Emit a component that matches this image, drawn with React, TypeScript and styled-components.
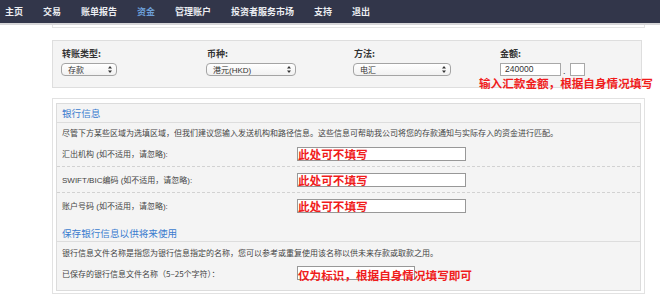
import styled, { createGlobalStyle } from 'styled-components';

const GlobalStyle = createGlobalStyle`
  body {
    margin: 0;
    background: #fff;
    font-family: 'Liberation Sans', 'Noto Sans CJK SC', sans-serif;
  }
`;

const NavBar = styled.nav`
  display: flex;
  align-items: center;
  gap: 20px;
  height: 23px;
  padding-left: 5px;
  background: #32364a;
  border-bottom: 2px solid #d6d6d8;
`;

const NavItem = styled.span<{ active?: boolean }>`
  font-family: 'Noto Sans CJK SC', sans-serif;
  font-size: 9px;
  font-weight: bold;
  color: ${({ active }) => (active ? '#6c9fd8' : '#eceef2')};
`;

const Main = styled.div`
  margin-left: 52px;
  width: 593px;
`;

const PrevPanelEdge = styled.div`
  height: 2px;
  border: 1px solid #e4e4e4;
  border-top: none;
`;

const TransferPanel = styled.div`
  margin-top: 12px;
  margin-right: 3px;
  height: 48px;
  box-sizing: border-box;
  border: 1px solid #dedede;
  background: #f4f4f4;
  display: grid;
  grid-template-columns: 145px 147px 146px 1fr;
  padding: 8px 0 0 9px;
`;

const Field = styled.div`
  position: relative;
  display: flex;
  flex-direction: column;
  align-items: flex-start;
`;

const FieldLabel = styled.div`
  font-family: 'Noto Sans CJK SC', sans-serif;
  font-size: 9px;
  font-weight: bold;
  line-height: 10px;
  color: #333;
  margin-bottom: 4px;
`;

const Select = styled.div<{ w: number }>`
  display: flex;
  align-items: center;
  justify-content: space-between;
  box-sizing: border-box;
  width: ${({ w }) => w}px;
  height: 13px;
  margin-left: -1px;
  padding: 0 4px 0 6px;
  border: 1px solid #a4a4a4;
  border-radius: 4px;
  background: linear-gradient(#ffffff, #f1f1f1);
  font-size: 8px;
  color: #333;
`;

const AmountRow = styled.div`
  display: flex;
  align-items: flex-end;
  gap: 2px;
`;

const TextBox = styled.div<{ w: number }>`
  box-sizing: border-box;
  width: ${({ w }) => w}px;
  height: 13px;
  padding-left: 4px;
  border: 1px solid #a8a8a8;
  background: #fff;
  font-size: 8.5px;
  line-height: 11px;
  color: #333;
`;

const Dot = styled.span`
  font-size: 9px;
  line-height: 9px;
  color: #333;
  margin-right: 2px;
`;

const Note = styled.div`
  position: absolute;
  left: -21px;
  top: 28px;
  white-space: nowrap;
  font-family: 'Noto Sans CJK SC', sans-serif;
  font-size: 11.6px;
  font-weight: bold;
  line-height: 13px;
  color: #f01c1c;
`;

const BankFrame = styled.div`
  margin-top: 10px;
  border: 1px solid #e2e2e2;
  padding: 4px 3px 2px 3px;
  background: #fff;
`;

const BankPanel = styled.div`
  border: 1px solid #dcdcdc;
  background: #f4f4f4;
  padding-bottom: 6px;
`;

const SectionTitle = styled.div<{ h: number; pt?: number }>`
  display: flex;
  align-items: center;
  height: ${({ h, pt }) => h - (pt ?? 0)}px;
  padding: ${({ pt }) => pt ?? 0}px 0 0 5px;
  border-bottom: 1px solid #dddddd;
  font-family: 'Noto Sans CJK SC', sans-serif;
  font-size: 9.6px;
  color: #3b7ccf;
`;

const Desc = styled.div<{ h: number }>`
  display: flex;
  align-items: center;
  height: ${({ h }) => h}px;
  padding-left: 5px;
  font-family: 'Noto Sans CJK SC', sans-serif;
  font-size: 8px;
  color: #444;
`;

const FormRow = styled.div<{ h: number; dashed?: boolean }>`
  display: flex;
  align-items: center;
  height: ${({ h }) => h}px;
  border-bottom: ${({ dashed }) => (dashed ? '1px dashed #d2d2d2' : 'none')};
`;

const RowLabel = styled.div<{ cjk?: boolean }>`
  flex: 0 0 235px;
  padding-left: 5px;
  font-family: ${({ cjk }) =>
    cjk ? "'Noto Sans CJK SC', sans-serif" : "'Liberation Sans', 'Noto Sans CJK SC', sans-serif"};
  font-size: 8px;
  color: #444;
`;

const NoteInput = styled.div<{ $w: number; $h: number }>`
  position: relative;
  flex: 0 0 auto;
  box-sizing: border-box;
  width: ${({ $w }) => $w}px;
  height: ${({ $h }) => $h}px;
  border: 1px solid #989898;
  background: #ffffff;
`;

const NoteText = styled.span<{ $dy: number }>`
  position: absolute;
  left: 0;
  top: ${({ $dy }) => $dy}px;
  white-space: nowrap;
  font-family: 'Noto Sans CJK SC', sans-serif;
  font-size: 11.6px;
  font-weight: bold;
  line-height: 12px;
  color: #f01c1c;
`;

const Arrows = () => (
  <svg width="4" height="7" viewBox="0 0 4 7">
    <path d="M2 0 L4 2.6 L0 2.6 Z M2 7 L4 4.4 L0 4.4 Z" fill="#333" />
  </svg>
);

const navItems = ['主页', '交易', '账单报告', '资金', '管理账户', '投资者服务市场', '支持', '退出'];

export default function App() {
  return (
    <>
      <GlobalStyle />
      <NavBar>
        {navItems.map((n) => (
          <NavItem key={n} active={n === '资金'}>
            {n}
          </NavItem>
        ))}
      </NavBar>
      <Main>
        <PrevPanelEdge />
        <TransferPanel>
          <Field>
            <FieldLabel>转账类型:</FieldLabel>
            <Select w={56}>
              <span>存款</span>
              <Arrows />
            </Select>
          </Field>
          <Field>
            <FieldLabel>币种:</FieldLabel>
            <Select w={90}>
              <span>港元(HKD)</span>
              <Arrows />
            </Select>
          </Field>
          <Field>
            <FieldLabel>方法:</FieldLabel>
            <Select w={98}>
              <span>电汇</span>
              <Arrows />
            </Select>
          </Field>
          <Field>
            <FieldLabel>金额:</FieldLabel>
            <AmountRow>
              <TextBox w={61}>240000</TextBox>
              <Dot>.</Dot>
              <TextBox w={15} />
            </AmountRow>
            <Note>输入汇款金额，根据自身情况填写</Note>
          </Field>
        </TransferPanel>
        <BankFrame>
          <BankPanel>
            <SectionTitle h={18}>银行信息</SectionTitle>
            <Desc h={18}>
              尽管下方某些区域为选填区域，但我们建议您输入发送机构和路径信息。这些信息可帮助我公司将您的存款通知与实际存入的资金进行匹配。
            </Desc>
            <FormRow h={25} dashed>
              <RowLabel>汇出机构 (如不适用，请忽略):</RowLabel>
              <NoteInput $w={169} $h={14}>
                <NoteText $dy={0}>此处可不填写</NoteText>
              </NoteInput>
            </FormRow>
            <FormRow h={25} dashed>
              <RowLabel>SWIFT/BIC编码 (如不适用，请忽略):</RowLabel>
              <NoteInput $w={169} $h={14}>
                <NoteText $dy={0}>此处可不填写</NoteText>
              </NoteInput>
            </FormRow>
            <FormRow h={25}>
              <RowLabel>账户号码 (如不适用，请忽略):</RowLabel>
              <NoteInput $w={169} $h={14}>
                <NoteText $dy={0}>此处可不填写</NoteText>
              </NoteInput>
            </FormRow>
            <SectionTitle h={23} pt={6}>保存银行信息以供将来使用</SectionTitle>
            <Desc h={20}>
              银行信息文件名称是指您为银行信息指定的名称，您可以参考或重复使用该名称以供未来存款或取款之用。
            </Desc>
            <FormRow h={22}>
              <RowLabel cjk>已保存的银行信息文件名称（5–25个字符）：</RowLabel>
              <NoteInput $w={118} $h={14}>
                <NoteText $dy={2}>仅为标识，根据自身情况填写即可</NoteText>
              </NoteInput>
            </FormRow>
          </BankPanel>
        </BankFrame>
      </Main>
    </>
  );
}
